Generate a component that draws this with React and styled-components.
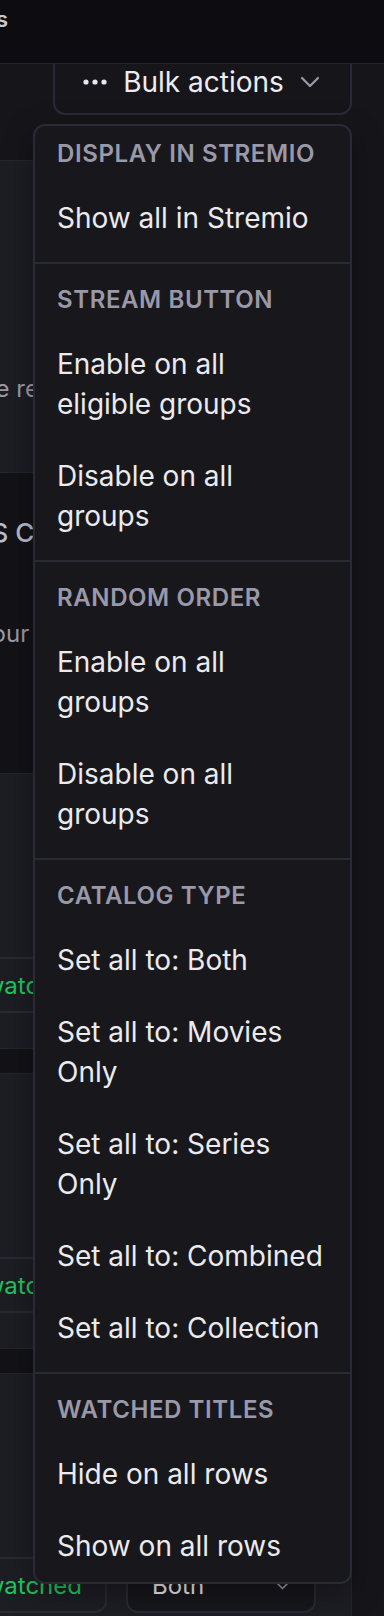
import React from "react";
import styled, { createGlobalStyle } from "styled-components";

const GlobalStyle = createGlobalStyle`
  html, body { margin: 0; padding: 0; background: #16161a; }
  body { font-family: Inter, "Noto Sans", sans-serif; overflow: hidden; }
  * { box-sizing: border-box; }
  p, h2 { margin: 0; }
`;

const Screen = styled.div`
  width: 384px;
  height: 1616px;
  overflow: hidden;
  background: #16161a;
`;

const Header = styled.header`
  position: relative;
  z-index: 2;
  height: 64px;
  padding-top: 5px;
  background: #0d0c11;
  border-bottom: 1px solid #25242d;
`;

// page is scrolled sideways, only the tail of the title shows
const TitleClip = styled.div`
  width: 8px;
  display: flex;
  justify-content: flex-end;
`;

const Title = styled.h1`
  margin: 0;
  font-size: 22px;
  line-height: 28px;
  font-weight: 600;
  color: #c9c9d3;
  white-space: nowrap;
`;

const Main = styled.main`
  margin-top: -15px;
  padding-right: 32px;
`;

const Toolbar = styled.div`
  height: 111px;
  display: flex;
  justify-content: flex-end;
`;

const MenuAnchor = styled.div`
  position: relative;
  width: 299px;
  height: 66px;
`;

const BulkButton = styled.button`
  width: 100%;
  height: 100%;
  padding: 0 2px 0 0;
  display: flex;
  align-items: center;
  justify-content: center;
  gap: 16px;
  background: transparent;
  border: 2px solid #2a2a34;
  border-radius: 12px;
  color: #ececf1;
  font-family: Inter, sans-serif;
  font-size: 28px;
  line-height: 40px;
  font-weight: 400;
`;

const Menu = styled.div`
  position: absolute;
  top: calc(100% + 9px);
  right: 0;
  z-index: 10;
  width: 319px;
  background: #18181c;
  border: 2px solid #2a2a34;
  border-radius: 12px;
  box-shadow: 0 10px 30px rgba(0, 0, 0, 0.35);
`;

const MenuLabel = styled.div`
  padding: 12px 24px 12px 22px;
  font-size: 24px;
  line-height: 32px;
  font-weight: 600;
  letter-spacing: 0.025em;
  text-transform: uppercase;
  color: #9a99a9;
`;

const MenuItem = styled.div`
  padding: 16px 27px 16px 22px;
  font-size: 28px;
  line-height: 40px;
  color: #ebebef;
  cursor: default;
`;

const Separator = styled.div`
  height: 2px;
  margin: 8px 0;
  background: #2a2a34;
`;

const InfoCard = styled.section`
  height: 313px;
  padding-top: 212px;
  overflow: hidden;
  background: #1d1d24;
  border-top: 1px solid #25252e;
  border-bottom: 1px solid #25252e;
`;

const Clipped = styled.p`
  margin-left: ${(p) => p.$shift}px;
  font-size: 24px;
  line-height: 32px;
  white-space: nowrap;
  color: #9b9ba8;
`;

const ListsPanel = styled.section`
  background: #131317;
`;

const PanelHead = styled.div`
  height: 300px;
  padding-top: 42px;
  overflow: hidden;
`;

const Heading = styled.h2`
  margin-left: -158px;
  font-size: 26px;
  line-height: 36px;
  font-weight: 500;
  color: #b9bdcc;
  white-space: nowrap;
`;

const Description = styled(Clipped)`
  margin-top: 67px;
`;

const CardList = styled.div`
  display: flex;
  flex-direction: column;
  gap: 24px;
`;

const ListCard = styled.article`
  padding: 183px 0 35px;
  background: #1d1d24;
  border: 1px solid #25252e;
  border-left: none;
`;

const ControlRow = styled.div`
  display: flex;
  align-items: center;
  gap: 19px;
`;

const WatchedToggle = styled.button`
  width: 200px;
  height: 56px;
  margin-left: -93px;
  padding: 0 23px 0 0;
  text-align: right;
  background: transparent;
  border: 2px solid #2a2a34;
  border-radius: 12px;
  font-family: Inter, sans-serif;
  font-size: 24px;
  color: #22c55e;
  white-space: nowrap;
`;

const Select = styled.button`
  width: 190px;
  height: 56px;
  padding: 0 24px;
  display: flex;
  align-items: center;
  justify-content: space-between;
  background: #17171c;
  border: 2px solid #2a2a34;
  border-radius: 12px;
  font-family: Inter, sans-serif;
  font-size: 24px;
  color: #ececf1;
`;

const Dots = () => (
  <svg width="24" height="6" viewBox="0 0 24 6" fill="#e6e6ec">
    <circle cx="3" cy="3" r="2.6" />
    <circle cx="12" cy="3" r="2.6" />
    <circle cx="21" cy="3" r="2.6" />
  </svg>
);

const Chevron = ({ w = 20 }) => (
  <svg width={w} height={w * 0.6} viewBox="0 0 20 12" fill="none" stroke="#9a9aa8" strokeWidth="2.2" strokeLinecap="round" strokeLinejoin="round">
    <path d="M2 2l8 8 8-8" />
  </svg>
);

const groups = [
  { label: "Display in Stremio", items: ["Show all in Stremio"] },
  { label: "Stream button", items: ["Enable on all eligible groups", "Disable on all groups"] },
  { label: "Random order", items: ["Enable on all groups", "Disable on all groups"] },
  {
    label: "Catalog type",
    items: [
      "Set all to: Both",
      "Set all to: Movies Only",
      "Set all to: Series Only",
      "Set all to: Combined",
      "Set all to: Collection",
    ],
  },
  { label: "Watched titles", items: ["Hide on all rows", "Show on all rows"] },
];

function BulkMenu() {
  return (
    <Menu role="menu">
      {groups.map((g, i) => (
        <React.Fragment key={g.label}>
          {i > 0 && <Separator />}
          <MenuLabel>{g.label}</MenuLabel>
          {g.items.map((item) => (
            <MenuItem role="menuitem" key={item}>{item}</MenuItem>
          ))}
        </React.Fragment>
      ))}
    </Menu>
  );
}

function Card() {
  return (
    <ListCard>
      <ControlRow>
        <WatchedToggle>Hide watched</WatchedToggle>
        <Select>
          Both
          <Chevron w={15} />
        </Select>
      </ControlRow>
    </ListCard>
  );
}

export default function App() {
  return (
    <Screen>
      <GlobalStyle />
      <Header>
        <TitleClip>
          <Title>Catalogs</Title>
        </TitleClip>
      </Header>
      <Main>
        <Toolbar>
          <MenuAnchor>
            <BulkButton>
              <Dots />
              Bulk actions
              <Chevron />
            </BulkButton>
            <BulkMenu />
          </MenuAnchor>
        </Toolbar>
        <InfoCard>
          <Clipped $shift={-134}>Changes are refreshed in Stremio automatically</Clipped>
        </InfoCard>
        <ListsPanel>
          <PanelHead>
            <Heading>TRAKT LISTS Catalogs</Heading>
            <Description $shift={-118}>Reorder your catalogs</Description>
          </PanelHead>
          <CardList>
            <Card />
            <Card />
            <Card />
          </CardList>
        </ListsPanel>
      </Main>
    </Screen>
  );
}
